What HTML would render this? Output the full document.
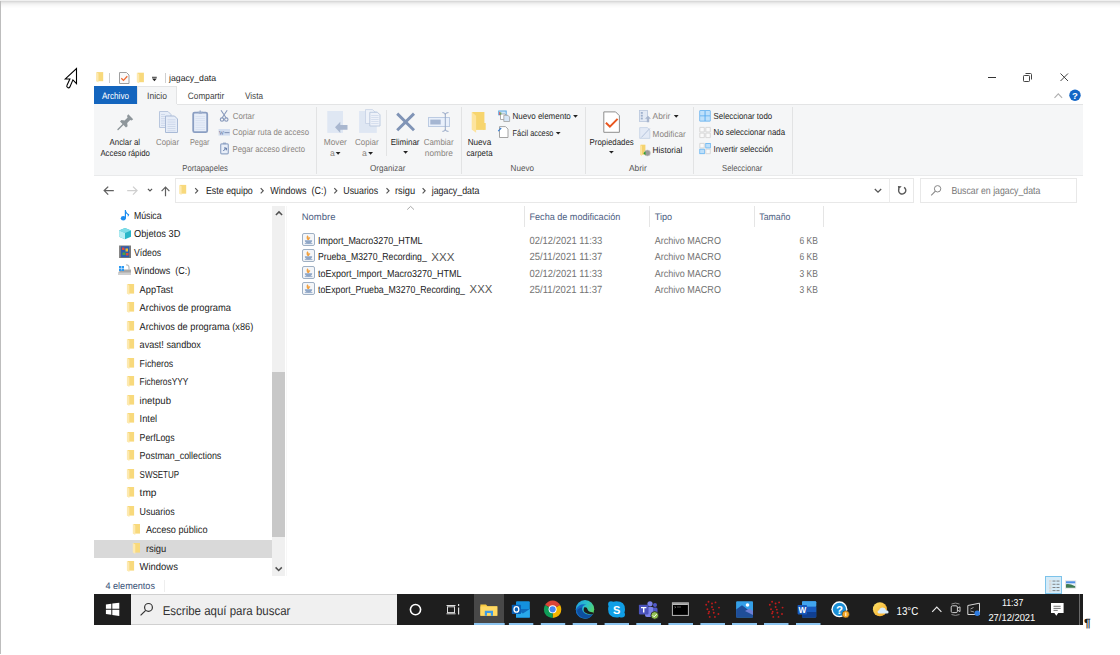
<!DOCTYPE html>
<html><head><meta charset="utf-8"><style>
html,body{margin:0;padding:0;}
body{width:1120px;height:655px;overflow:hidden;position:relative;background:#fff;font-family:"Liberation Sans",sans-serif;}
.t{position:absolute;line-height:1;white-space:pre;}
.r{position:absolute;display:block;}
</style></head><body>
<div class="r" style="left:0px;top:0px;width:1120px;height:1px;background:#f0f0f0;"></div>
<div class="r" style="left:0px;top:1px;width:1120px;height:1px;background:#d9d9d9;"></div>
<div class="r" style="left:0px;top:2px;width:1120px;height:1px;background:#e5e5e5;"></div>
<div class="r" style="left:0px;top:3px;width:1120px;height:1px;background:#eeeeee;"></div>
<div class="r" style="left:0px;top:4px;width:1120px;height:1px;background:#f4f4f4;"></div>
<div class="r" style="left:0px;top:5px;width:1120px;height:1px;background:#f8f8f8;"></div>
<div class="r" style="left:0px;top:6px;width:1120px;height:1px;background:#fbfbfb;"></div>
<div class="r" style="left:0px;top:7px;width:1120px;height:1px;background:#fdfdfd;"></div>
<div class="r" style="left:0px;top:1px;width:1px;height:653px;background:#bdbdbd;"></div>
<div class="r" style="left:94px;top:86px;width:43px;height:18px;background:#1465be;"></div>
<div class="r" style="left:137px;top:86px;width:40px;height:19px;background:#f5f6f7;box-sizing:border-box;border:1px solid #e3e4e5;border-bottom:none;"></div>
<div class="r" style="left:94px;top:104px;width:989px;height:72px;background:#f5f6f7;"></div>
<div class="r" style="left:177px;top:104px;width:906px;height:1px;background:#e3e4e5;"></div>
<div class="r" style="left:94px;top:175px;width:989px;height:1px;background:#e9eaeb;"></div>
<div class="r" style="left:316px;top:107px;width:1px;height:67px;background:#e2e3e4;"></div>
<div class="r" style="left:461px;top:107px;width:1px;height:67px;background:#e2e3e4;"></div>
<div class="r" style="left:585px;top:107px;width:1px;height:67px;background:#e2e3e4;"></div>
<div class="r" style="left:693px;top:107px;width:1px;height:67px;background:#e2e3e4;"></div>
<div class="r" style="left:792px;top:107px;width:1px;height:67px;background:#e2e3e4;"></div>
<div class="r" style="left:386px;top:110px;width:1px;height:46px;background:#e2e3e4;"></div>
<div class="r" style="left:175px;top:178px;width:739px;height:25px;background:#fff;box-sizing:border-box;border:1px solid #e8e8e8;"></div>
<div class="r" style="left:889px;top:178px;width:1px;height:25px;background:#ebebeb;"></div>
<div class="r" style="left:920px;top:178px;width:157px;height:25px;background:#fff;box-sizing:border-box;border:1px solid #e8e8e8;"></div>
<div class="r" style="left:94px;top:540px;width:178px;height:18px;background:#d9d9d9;"></div>
<div class="r" style="left:272px;top:206px;width:13px;height:370px;background:#f0f0f0;"></div>
<div class="r" style="left:272px;top:372px;width:13px;height:165px;background:#c8c8c8;"></div>
<div class="r" style="left:286px;top:206px;width:1px;height:370px;background:#f7f7f7;"></div>
<div class="r" style="left:524px;top:206px;width:1px;height:21px;background:#e5e5e5;"></div>
<div class="r" style="left:649px;top:206px;width:1px;height:21px;background:#e5e5e5;"></div>
<div class="r" style="left:754px;top:206px;width:1px;height:21px;background:#e5e5e5;"></div>
<div class="r" style="left:823px;top:206px;width:1px;height:21px;background:#e5e5e5;"></div>
<div class="r" style="left:164px;top:580px;width:1px;height:12px;background:#eeeeee;"></div>
<div class="r" style="left:1045px;top:576px;width:17px;height:18px;background:#d5ebf8;box-sizing:border-box;border:1px solid #7cc3ea;"></div>
<div class="r" style="left:94px;top:594px;width:989px;height:31px;background:#1e1e1e;"></div>
<div class="r" style="left:131px;top:594px;width:266px;height:31px;background:#f0f0f0;box-sizing:border-box;border-top:1px solid #d0d0d0;border-bottom:1px solid #d0d0d0;"></div>
<div class="r" style="left:474px;top:594px;width:30px;height:31px;background:#484848;"></div>
<div class="r" style="left:1079px;top:594px;width:1px;height:31px;background:#6a6a6a;"></div>
<svg class="r" style="left:0;top:0" width="1120" height="655" viewBox="0 0 1120 655"><path d="M76.5 68.5 L76.5 83.6 L72.9 79.9 L69.9 86.9 Q68.9 88.4 67.4 87.4 Q66.4 86.6 66.9 85.6 L69.9 79 L65.3 78.9 Z" fill="#fff" stroke="#000" stroke-width="1.1" stroke-linejoin="miter"/><rect x="96.70" y="72.10" width="6.50" height="9.10" fill="#f8d97c"/><path d="M96.10 72.10 L98.51 73.57 L98.51 82.60 L96.10 81.13Z" fill="#fde9b0"/><rect x="109" y="73" width="1" height="10" fill="#cfcfcf"/><path d="M119.5 72.5 H126.5 L129 75 V83.5 H119.5 Z" fill="#fafafa" stroke="#a0a0a0" stroke-width="1"/><polyline points="121.3,78.2 123.5,80.4 127.3,76.3" fill="none" stroke="#f06a33" stroke-width="1.3"/><rect x="137.40" y="72.70" width="6.50" height="9.50" fill="#f8d97c"/><path d="M136.80 72.70 L139.21 74.23 L139.21 83.60 L136.80 82.07Z" fill="#fde9b0"/><rect x="152" y="76.8" width="4.8" height="0.9" fill="#222"/><path d="M152 78.6 H156.8 L154.4 81.3Z" fill="#222"/><rect x="165" y="73" width="1" height="10" fill="#cfcfcf"/><rect x="988" y="77" width="8" height="1" fill="#333"/><rect x="1023.5" y="75.5" width="6" height="6" rx="0.8" fill="none" stroke="#444" stroke-width="1"/><path d="M1025.5 73.5 H1030.5 Q1031.5 73.5 1031.5 74.5 V79.5" fill="none" stroke="#444" stroke-width="1"/><path d="M1060.5 73.5 L1068 81 M1068 73.5 L1060.5 81" stroke="#444" stroke-width="1"/><polyline points="1054.5,97.8 1058.3,93.8 1062.1,97.8" fill="none" stroke="#b0b0b0" stroke-width="1.1"/><circle cx="1075" cy="95.2" r="5.7" fill="#1366c6"/><text x="1075" y="98.9" font-size="9.5" font-weight="700" fill="#fff" text-anchor="middle" font-family="Liberation Sans">?</text><path d="M118 129.5 L123.5 124" stroke="#8e969b" stroke-width="1.4" stroke-linecap="round"/><path d="M128.3 114.3 L133.2 119.2 L131.6 120.6 L130.2 120 L127.2 123 L127.6 126.2 L126 127.6 L120 121.6 L121.4 120 L124.6 120.4 L127.6 117.4 L127 116Z" fill="#8e969b"/><path d="M159.5 111.5 H168 L171 114.5 V127.5 H159.5Z" fill="#e6edf8" stroke="#b9c7de" stroke-width="1"/><path d="M165.5 116 H174.5 L177.5 119 V132.5 H165.5Z" fill="#e6edf8" stroke="#a9bad6" stroke-width="1"/><rect x="167.5" y="119.5" width="8" height="0.7" fill="#c3d0e6"/><rect x="167.5" y="121.7" width="8" height="0.7" fill="#c3d0e6"/><rect x="167.5" y="123.9" width="8" height="0.7" fill="#c3d0e6"/><rect x="167.5" y="126.1" width="8" height="0.7" fill="#c3d0e6"/><rect x="167.5" y="128.3" width="8" height="0.7" fill="#c3d0e6"/><rect x="167.5" y="130.5" width="8" height="0.7" fill="#c3d0e6"/><rect x="161" y="114.0" width="4" height="0.7" fill="#c3d0e6"/><rect x="161" y="116.2" width="4" height="0.7" fill="#c3d0e6"/><rect x="161" y="118.4" width="4" height="0.7" fill="#c3d0e6"/><rect x="161" y="120.6" width="4" height="0.7" fill="#c3d0e6"/><rect x="161" y="122.8" width="4" height="0.7" fill="#c3d0e6"/><rect x="161" y="125.0" width="4" height="0.7" fill="#c3d0e6"/><rect x="193.2" y="112.6" width="14" height="19.6" rx="1.5" fill="#e6edf8" stroke="#8a9ec2" stroke-width="1.8"/><path d="M197.5 111.8 H203 L201.5 113.8 H199Z M199.5 110.4 h1.4 v1.6 h-1.4z" fill="#9aacca"/><rect x="195.5" y="116.0" width="9.5" height="0.6" fill="#d0dbee"/><rect x="195.5" y="118.2" width="9.5" height="0.6" fill="#d0dbee"/><rect x="195.5" y="120.4" width="9.5" height="0.6" fill="#d0dbee"/><rect x="195.5" y="122.6" width="9.5" height="0.6" fill="#d0dbee"/><rect x="195.5" y="124.8" width="9.5" height="0.6" fill="#d0dbee"/><rect x="195.5" y="127.0" width="9.5" height="0.6" fill="#d0dbee"/><rect x="195.5" y="129.2" width="9.5" height="0.6" fill="#d0dbee"/><path d="M221 110.2 L226.2 118 M227.2 110.2 L222 118" stroke="#8899bb" stroke-width="1.1"/><circle cx="222" cy="119.6" r="1.7" fill="none" stroke="#8899bb" stroke-width="1.1"/><circle cx="226.3" cy="119.6" r="1.7" fill="none" stroke="#8899bb" stroke-width="1.1"/><rect x="218.5" y="129" width="11.5" height="6.6" fill="#d3def0"/><text x="219" y="134.6" font-size="6" fill="#5b6f99" font-family="Liberation Serif" textLength="5" lengthAdjust="spacingAndGlyphs">W</text><rect x="224.5" y="132.3" width="5" height="0.8" fill="#6a7ea5"/><rect x="220.7" y="143.8" width="7.6" height="10" rx="1" fill="#e8eef8" stroke="#93a6c6" stroke-width="1.2"/><rect x="223" y="142.6" width="3" height="1.6" fill="#93a6c6"/><path d="M223.3 151 L226 148.3 M224 148 H226.3 V150.3" stroke="#5670a0" stroke-width="1" fill="none"/><rect x="327.3" y="111" width="15.7" height="21.9" fill="#dfe7f3"/><path d="M335 127.3 L340.3 121.8 V125.1 H347.5 V129.8 H340.3 V133.1Z" fill="#a9b7cf"/><rect x="359.1" y="111" width="17.7" height="21.9" fill="#dfe7f3"/><path d="M365.5 109.6 H372.5 L375 112 V123.5 H365.5Z" fill="#eef2f9" stroke="#c5d1e5" stroke-width="0.8"/><path d="M369.8 112.3 H377.5 L380 114.8 V126 H369.8Z" fill="#eef2f9" stroke="#b9c7de" stroke-width="0.9"/><rect x="371.2" y="115.0" width="7.4" height="0.6" fill="#c6d2e6"/><rect x="371.2" y="117.0" width="7.4" height="0.6" fill="#c6d2e6"/><rect x="371.2" y="119.0" width="7.4" height="0.6" fill="#c6d2e6"/><rect x="371.2" y="121.0" width="7.4" height="0.6" fill="#c6d2e6"/><rect x="371.2" y="123.0" width="7.4" height="0.6" fill="#c6d2e6"/><path d="M397.2 113.6 L414 130.2 M414 113.6 L397.2 130.2" stroke="#8094b6" stroke-width="2.9"/><rect x="428.5" y="117.5" width="21" height="9" fill="#e9f0fb" stroke="#bccbe2" stroke-width="1"/><rect x="430.3" y="119.6" width="10.4" height="4.9" fill="#a5b6d2"/><path d="M445.3 113.5 V130.5 M442.4 112.6 Q445.3 112.6 445.3 114.5 Q445.3 112.6 448.5 112.6 M442.4 131.4 Q445.3 131.4 445.3 129.5 Q445.3 131.4 448.5 131.4" stroke="#98a9c7" stroke-width="1" fill="none"/><rect x="472.2" y="112" width="12.2" height="17.9" fill="#f7d56e"/><rect x="483" y="123" width="2.7" height="6.9" fill="#f7d56e"/><path d="M471.7 112 L476.1 115.8 V132.7 L471.7 129.6Z" fill="#fde49e"/><rect x="498.2" y="110.5" width="8.5" height="4.8" fill="#5aa7e0"/><rect x="499.2" y="111.5" width="6.5" height="2.8" fill="#cfe6f7"/><path d="M500.5 114 H505 L506.5 115.5 V119.5 H500.5Z" fill="#fff" stroke="#9a9a9a" stroke-width="0.8"/><path d="M503.8 115.3 H508 L509.6 117 V121.5 H503.8Z" fill="#d6e6f6" stroke="#a0a0a0" stroke-width="0.8"/><rect x="499.3" y="112" width="1" height="3" fill="#d44"/><rect x="500.3" y="112.5" width="1" height="2" fill="#4a4"/><path d="M499.5 126.6 H505.5 L508 129.1 V137.5 H499.5Z" fill="#fff" stroke="#9a9a9a" stroke-width="0.9"/><path d="M497.8 130.8 L500.8 127.6 L501.6 128.4 L498.6 131.6Z" fill="#3b7fd0"/><path d="M603.8 111.9 H615.6 L619.4 115.7 V132.3 H603.8Z" fill="#fff" stroke="#8e8e8e" stroke-width="1"/><polyline points="605.9,122.7 609.9,126.7 617.6,118.9" fill="none" stroke="#e9561f" stroke-width="2"/><rect x="639.5" y="110.5" width="8" height="11" fill="#e2e9f4" stroke="#b8c6dc" stroke-width="0.8"/><rect x="640.8" y="112.0" width="2" height="1.8" fill="#9eb0cc"/><rect x="640.8" y="114.8" width="2" height="1.8" fill="#9eb0cc"/><rect x="640.8" y="117.6" width="2" height="1.8" fill="#9eb0cc"/><path d="M646.8 122.3 V118.8 H645 L648 115.8 L651 118.8 H649.2 V122.3Z" fill="#a8b6ce"/><path d="M639.7 127.6 H647.5 L649.8 130 V138.4 H639.7Z" fill="#e3eaf6" stroke="#c3d0e4" stroke-width="0.8"/><path d="M641.3 137.5 L649.8 128.5" stroke="#b5c4dc" stroke-width="1"/><rect x="640.6" y="144.7" width="4.8" height="10" fill="#f5d36e"/><path d="M640 144.7 L642 146 V156 L640 154.7Z" fill="#fde49e"/><circle cx="647.4" cy="153" r="3" fill="#9a9a9a" stroke="#c8c8c8" stroke-width="0.6"/><path d="M643.3 153.2 L645.5 151.2 L645.5 155.2Z" fill="#2da02d"/><rect x="699.4" y="110.2" width="11.2" height="11.3" rx="0.8" fill="#52a8ee"/><path d="M700.1 110.9 h4.5 v4.6 h-4.5z M705.5 110.9 h4.4 v4.6 h-4.4z M700.1 116.3 h4.5 v4.5 h-4.5z M705.5 116.3 h4.4 v4.5 h-4.4z" fill="#bfe0fa"/><path d="M699.8 127.4 h4.5 v4.5 h-4.5z M705.8 127.4 h4.5 v4.5 h-4.5z M699.8 133.1 h4.5 v4.5 h-4.5z M705.8 133.1 h4.5 v4.5 h-4.5z" fill="#fafafa" stroke="#d0d0d0" stroke-width="0.8"/><path d="M699.8 143.4 h4.5 v4.5 h-4.5z M705.8 149.2 h4.5 v4.5 h-4.5z" fill="#fafafa" stroke="#d0d0d0" stroke-width="0.8"/><rect x="705.4" y="143" width="5.3" height="5.3" fill="#5aaef0"/><rect x="706.1" y="143.7" width="3.9" height="3.9" fill="#bfe0fa"/><rect x="699.4" y="148.8" width="5.3" height="5.3" fill="#5aaef0"/><rect x="700.1" y="149.5" width="3.9" height="3.9" fill="#bfe0fa"/><path d="M335.7 152.1 H340.5 L338.1 154.7Z" fill="#222"/><path d="M368.2 152.1 H373.0 L370.6 154.7Z" fill="#222"/><path d="M403.2 151.1 H408.0 L405.6 153.7Z" fill="#222"/><path d="M573.1 115.1 H577.9 L575.5 117.7Z" fill="#222"/><path d="M555.8 132.0 H560.6 L558.2 134.6Z" fill="#222"/><path d="M609.0 151.0 H613.8 L611.4 153.6Z" fill="#222"/><path d="M673.8 115.1 H678.6 L676.2 117.7Z" fill="#222"/><path d="M113.8 190.6 H104.3 M108.2 186.6 L104.2 190.6 L108.2 194.6" fill="none" stroke="#606060" stroke-width="1.3"/><path d="M127.2 190.6 H136.9 M133 186.6 L137 190.6 L133 194.6" fill="none" stroke="#cfcfcf" stroke-width="1.3"/><polyline points="147.9,188.8 150,190.9 152.1,188.8" fill="none" stroke="#555" stroke-width="1.2"/><path d="M165.5 196.2 V187.3 M161.6 191.2 L165.5 187.2 L169.4 191.2" fill="none" stroke="#606060" stroke-width="1.2"/><rect x="179.80" y="184.90" width="6.40" height="8.80" fill="#f8d97c"/><path d="M179.20 184.90 L181.58 186.33 L181.58 195.10 L179.20 193.67Z" fill="#fde9b0"/><polyline points="195.2,188.2 197.7,190.8 195.2,193.4" fill="none" stroke="#555" stroke-width="1.2"/><polyline points="260.7,188.2 263.2,190.8 260.7,193.4" fill="none" stroke="#555" stroke-width="1.2"/><polyline points="334.3,188.2 336.8,190.8 334.3,193.4" fill="none" stroke="#555" stroke-width="1.2"/><polyline points="386.5,188.2 389.0,190.8 386.5,193.4" fill="none" stroke="#555" stroke-width="1.2"/><polyline points="422.6,188.2 425.1,190.8 422.6,193.4" fill="none" stroke="#555" stroke-width="1.2"/><polyline points="874.8,189 878,192.2 881.2,189" fill="none" stroke="#555" stroke-width="1.3"/><path d="M904 187.3 A3.6 3.6 0 1 1 899.1 188.6" fill="none" stroke="#5a5a5a" stroke-width="1.4"/><path d="M897.9 185.9 L901.7 186.2 L898.3 189.8Z" fill="#5a5a5a"/><circle cx="937.6" cy="188.8" r="3.2" fill="none" stroke="#888" stroke-width="1"/><path d="M935.4 191.1 L931.2 195.3" stroke="#888" stroke-width="1.1"/><polyline points="275.9,215 279,211.9 282.1,215" fill="none" stroke="#505050" stroke-width="1.5"/><polyline points="275.6,567.4 278.7,570.5 281.8,567.4" fill="none" stroke="#505050" stroke-width="1.5"/><ellipse cx="123.3" cy="218.3" rx="2.5" ry="2.2" fill="#1a8cf0"/><rect x="124.8" y="210" width="1.2" height="8.4" fill="#1a8cf0"/><path d="M125.6 210.2 Q126.5 213 129.3 214.6 Q128.8 216.5 127.6 217 Q128.8 214.8 125.6 213.2Z" fill="#1a8cf0"/><path d="M125 228 L131 230.5 L131 236.8 L125 239.3 L119.1 236.8 L119.1 230.5Z" fill="#29b6c8"/><path d="M125 228 L131 230.5 L125 233 L119.1 230.5Z" fill="#7fdde8"/><path d="M119.1 230.5 L125 233 V239.3 L119.1 236.8Z" fill="#b8eef4"/><rect x="119.1" y="245.5" width="11.9" height="12.5" fill="#7a7a7a"/><rect x="121" y="246.3" width="8.1" height="10.9" fill="#2a5db0"/><rect x="122" y="247.5" width="2.5" height="2.5" fill="#e04a3a"/><rect x="125.5" y="248.5" width="2.5" height="3" fill="#f0c030"/><rect x="122.5" y="252.5" width="3" height="2.5" fill="#50a040"/><rect x="126" y="253" width="2.5" height="2.5" fill="#e04a3a"/><path d="M118.5 272 L122 269.5 H131 V275 H118.5Z" fill="#a8a8a8"/><path d="M118.5 272.5 H131 V275 H118.5Z" fill="#cfcfcf"/><rect x="119" y="266" width="2.3" height="2.3" fill="#2b9af3"/><rect x="121.7" y="266" width="2.3" height="2.3" fill="#2b9af3"/><rect x="119" y="268.7" width="2.3" height="2.3" fill="#2b9af3"/><rect x="121.7" y="268.7" width="2.3" height="2.3" fill="#2b9af3"/><path d="M126 265 Q129 264.6 129 267.5 V270" fill="none" stroke="#bdbdbd" stroke-width="1.2"/><rect x="127.50" y="284.00" width="6.60" height="9.60" fill="#f8d97c"/><path d="M126.90 284.00 L129.35 285.54 L129.35 295.00 L126.90 293.46Z" fill="#fde9b0"/><rect x="127.50" y="302.00" width="6.60" height="9.60" fill="#f8d97c"/><path d="M126.90 302.00 L129.35 303.54 L129.35 313.00 L126.90 311.46Z" fill="#fde9b0"/><rect x="127.50" y="321.00" width="6.60" height="9.60" fill="#f8d97c"/><path d="M126.90 321.00 L129.35 322.54 L129.35 332.00 L126.90 330.46Z" fill="#fde9b0"/><rect x="127.50" y="339.00" width="6.60" height="9.60" fill="#f8d97c"/><path d="M126.90 339.00 L129.35 340.54 L129.35 350.00 L126.90 348.46Z" fill="#fde9b0"/><rect x="127.50" y="358.00" width="6.60" height="9.60" fill="#f8d97c"/><path d="M126.90 358.00 L129.35 359.54 L129.35 369.00 L126.90 367.46Z" fill="#fde9b0"/><rect x="127.50" y="376.00" width="6.60" height="9.60" fill="#f8d97c"/><path d="M126.90 376.00 L129.35 377.54 L129.35 387.00 L126.90 385.46Z" fill="#fde9b0"/><rect x="127.50" y="395.00" width="6.60" height="9.60" fill="#f8d97c"/><path d="M126.90 395.00 L129.35 396.54 L129.35 406.00 L126.90 404.46Z" fill="#fde9b0"/><rect x="127.50" y="413.00" width="6.60" height="9.60" fill="#f8d97c"/><path d="M126.90 413.00 L129.35 414.54 L129.35 424.00 L126.90 422.46Z" fill="#fde9b0"/><rect x="127.50" y="432.00" width="6.60" height="9.60" fill="#f8d97c"/><path d="M126.90 432.00 L129.35 433.54 L129.35 443.00 L126.90 441.46Z" fill="#fde9b0"/><rect x="127.50" y="450.00" width="6.60" height="9.60" fill="#f8d97c"/><path d="M126.90 450.00 L129.35 451.54 L129.35 461.00 L126.90 459.46Z" fill="#fde9b0"/><rect x="127.50" y="469.00" width="6.60" height="9.60" fill="#f8d97c"/><path d="M126.90 469.00 L129.35 470.54 L129.35 480.00 L126.90 478.46Z" fill="#fde9b0"/><rect x="127.50" y="487.00" width="6.60" height="9.60" fill="#f8d97c"/><path d="M126.90 487.00 L129.35 488.54 L129.35 498.00 L126.90 496.46Z" fill="#fde9b0"/><rect x="127.50" y="506.00" width="6.60" height="9.60" fill="#f8d97c"/><path d="M126.90 506.00 L129.35 507.54 L129.35 517.00 L126.90 515.46Z" fill="#fde9b0"/><rect x="133.40" y="524.00" width="6.60" height="9.60" fill="#f8d97c"/><path d="M132.80 524.00 L135.25 525.54 L135.25 535.00 L132.80 533.46Z" fill="#fde9b0"/><rect x="133.40" y="543.00" width="6.60" height="9.60" fill="#f8d97c"/><path d="M132.80 543.00 L135.25 544.54 L135.25 554.00 L132.80 552.46Z" fill="#fde9b0"/><rect x="127.50" y="561.00" width="6.60" height="9.60" fill="#f8d97c"/><path d="M126.90 561.00 L129.35 562.54 L129.35 572.00 L126.90 570.46Z" fill="#fde9b0"/><polyline points="407.2,209.6 410.6,206.4 414,209.6" fill="none" stroke="#a8a8a8" stroke-width="1"/><rect x="302.5" y="233.5" width="12" height="12" rx="1.5" fill="#f4f6f9" stroke="#9fb0c4" stroke-width="1"/><path d="M307.2 235.2 q1.8 1 1.2 2.4 q1.6 -1 2 0.3 q-1.2 0.4 -1.4 2.2 q-1.6 0 -2.2 -1.2 q-0.6 -2 0.4 -3.7z" fill="#f0a040"/><path d="M304.8 240.2 h7.4 q0 2.8 -3.7 3.6 q-3.7 -0.8 -3.7 -3.6z" fill="#8fa6c6"/><rect x="304.8" y="243.2" width="7.6" height="0.9" fill="#8fa6c6"/><rect x="302.5" y="249.5" width="12" height="12" rx="1.5" fill="#f4f6f9" stroke="#9fb0c4" stroke-width="1"/><path d="M307.2 251.2 q1.8 1 1.2 2.4 q1.6 -1 2 0.3 q-1.2 0.4 -1.4 2.2 q-1.6 0 -2.2 -1.2 q-0.6 -2 0.4 -3.7z" fill="#f0a040"/><path d="M304.8 256.2 h7.4 q0 2.8 -3.7 3.6 q-3.7 -0.8 -3.7 -3.6z" fill="#8fa6c6"/><rect x="304.8" y="259.2" width="7.6" height="0.9" fill="#8fa6c6"/><rect x="302.5" y="266.5" width="12" height="12" rx="1.5" fill="#f4f6f9" stroke="#9fb0c4" stroke-width="1"/><path d="M307.2 268.2 q1.8 1 1.2 2.4 q1.6 -1 2 0.3 q-1.2 0.4 -1.4 2.2 q-1.6 0 -2.2 -1.2 q-0.6 -2 0.4 -3.7z" fill="#f0a040"/><path d="M304.8 273.2 h7.4 q0 2.8 -3.7 3.6 q-3.7 -0.8 -3.7 -3.6z" fill="#8fa6c6"/><rect x="304.8" y="276.2" width="7.6" height="0.9" fill="#8fa6c6"/><rect x="302.5" y="282.5" width="12" height="12" rx="1.5" fill="#f4f6f9" stroke="#9fb0c4" stroke-width="1"/><path d="M307.2 284.2 q1.8 1 1.2 2.4 q1.6 -1 2 0.3 q-1.2 0.4 -1.4 2.2 q-1.6 0 -2.2 -1.2 q-0.6 -2 0.4 -3.7z" fill="#f0a040"/><path d="M304.8 289.2 h7.4 q0 2.8 -3.7 3.6 q-3.7 -0.8 -3.7 -3.6z" fill="#8fa6c6"/><rect x="304.8" y="292.2" width="7.6" height="0.9" fill="#8fa6c6"/><rect x="1049" y="580.0" width="2.5" height="2.5" fill="#d8d8d8"/><rect x="1052.5" y="580.6" width="3" height="0.9" fill="#777"/><rect x="1056.5" y="580.6" width="3" height="0.9" fill="#777"/><rect x="1049" y="583.2" width="2.5" height="2.5" fill="#d8d8d8"/><rect x="1052.5" y="583.8" width="3" height="0.9" fill="#777"/><rect x="1056.5" y="583.8" width="3" height="0.9" fill="#777"/><rect x="1049" y="586.4" width="2.5" height="2.5" fill="#d8d8d8"/><rect x="1052.5" y="587.0" width="3" height="0.9" fill="#777"/><rect x="1056.5" y="587.0" width="3" height="0.9" fill="#777"/><rect x="1049" y="589.6" width="2.5" height="2.5" fill="#d8d8d8"/><rect x="1052.5" y="590.2" width="3" height="0.9" fill="#777"/><rect x="1056.5" y="590.2" width="3" height="0.9" fill="#777"/><rect x="1065" y="580.3" width="11.2" height="8.4" fill="#e4e4e4"/><rect x="1066" y="581.3" width="9.2" height="6.4" fill="#e8f2fb"/><rect x="1066" y="581.3" width="9.2" height="2" fill="#4f8fe6"/><path d="M1066 584.2 Q1069 583 1075.2 586.3 V587.7 H1066Z" fill="#3f7a52"/><path d="M105.9 604.6 L111.3 603.8 V608.8 H105.9Z M112.3 603.6 L119.3 602.7 V608.8 H112.3Z M105.9 609.8 H111.3 V614.8 L105.9 614.1Z M112.3 609.8 H119.3 V616 L112.3 615Z" fill="#fff"/><circle cx="148.5" cy="607.4" r="3.9" fill="none" stroke="#333" stroke-width="1.2"/><path d="M145.7 610.3 L140.6 615.4" stroke="#333" stroke-width="1.2"/><circle cx="415.5" cy="609.6" r="5.1" fill="none" stroke="#fff" stroke-width="1.6"/><path d="M446.5 605.5 H455.5 M446.5 613.8 H455.5" stroke="#ddd" stroke-width="1"/><rect x="447.5" y="606.8" width="7" height="5.8" fill="none" stroke="#ddd" stroke-width="1"/><rect x="458" y="604" width="1.2" height="2" fill="#ddd"/><rect x="458" y="607.5" width="1.2" height="7" fill="#ddd"/><path d="M480.4 604.5 V615.7 H497.3 V606.2 H487.5 L486 604.5Z" fill="#f8c93f"/><rect x="480.4" y="606.4" width="16.9" height="9.3" fill="#ffd964"/><path d="M484.8 610.8 H493 V615.7 H490.8 V613 H487 V615.7 H484.8Z" fill="#3c9be8"/><rect x="516" y="601.2" width="13.8" height="16.3" rx="1" fill="#1490df"/><rect x="516" y="609" width="13.8" height="8.5" fill="#0f6cbd"/><path d="M516 609 L522.9 613.5 L529.8 609 V617.5 H516Z" fill="#28a8ea"/><rect x="511.8" y="604.8" width="9.2" height="9.2" rx="0.8" fill="#0a5fb4"/><ellipse cx="516.4" cy="609.4" rx="2.4" ry="2.8" fill="none" stroke="#fff" stroke-width="1.3"/><path d="M552.6 609.3 L545.07 604.95 A8.7 8.7 0 0 1 560.13 604.95Z" fill="#db4437"/><path d="M552.6 609.3 L560.13 604.95 A8.7 8.7 0 0 1 552.6 618Z" fill="#f4b400"/><path d="M552.6 609.3 L552.6 618 A8.7 8.7 0 0 1 545.07 604.95Z" fill="#0f9d58"/><circle cx="552.6" cy="609.3" r="4" fill="#fff"/><circle cx="552.6" cy="609.3" r="3.1" fill="#4285f4"/><defs><linearGradient id="edg" x1="0" y1="0" x2="1" y2="0.6"><stop offset="0" stop-color="#1e9de6"/><stop offset="0.55" stop-color="#2cc3c8"/><stop offset="1" stop-color="#5ad660"/></linearGradient></defs><circle cx="585" cy="609.2" r="9.2" fill="url(#edg)"/><path d="M575.8 609.5 A9.2 9.2 0 0 0 593 614 Q588.5 615.5 585 613.2 Q581.5 610.8 582.3 607.6 Q583.3 604.8 586.5 604.8 Q580 602.5 575.8 609.5Z" fill="#1467c2"/><path d="M577 611 Q578.5 617.5 585 618.3 Q590 618.2 592.6 614.3 Q587.5 616 584.3 613.6 Q581 611 582.3 607.6 Q578.5 608 577 611Z" fill="#0d4f9e"/><path d="M584.3 607.3 Q587.2 606.8 587.6 609.6 Q588 612 593.2 612.6 L593 614 Q587.8 614.6 585 612.6 Q582.6 610.6 584.3 607.3Z" fill="#1c1c1c"/><path d="M611 601.2 Q608.1 601.2 608.1 604.2 Q608.1 605.2 608.6 606.2 Q608.1 607.4 608.1 609.3 Q608.1 617.5 616.5 617.5 Q618.4 617.5 619.5 617 Q620.5 617.5 621.8 617.5 Q625 617.5 625 614.5 Q625 613.4 624.4 612.4 Q625 611.2 625 609.3 Q625 601.2 616.5 601.2 Q614.5 601.2 613.5 601.7 Q612.3 601.2 611 601.2Z" fill="#109fe6"/><text x="616.6" y="613.6" font-size="11" font-weight="700" fill="#fff" text-anchor="middle" font-family="Liberation Sans">S</text><circle cx="650" cy="603.8" r="2.6" fill="#7b83eb"/><circle cx="655" cy="605" r="2" fill="#5059c9"/><rect x="645" y="607" width="9" height="10" rx="2" fill="#7b83eb"/><rect x="653" y="607.5" width="4.5" height="7" rx="1.5" fill="#5059c9"/><rect x="638.9" y="604.8" width="9.6" height="9.6" rx="0.8" fill="#4b53bc"/><path d="M641 607 H646.4 V608.3 H644.4 V612.4 H643 V608.3 H641Z" fill="#fff"/><circle cx="654.7" cy="615.4" r="3.8" fill="#92c353" stroke="#1c1c1c" stroke-width="0.8"/><polyline points="652.8,615.4 654.2,616.8 656.7,614.1" fill="none" stroke="#fff" stroke-width="1"/><rect x="672.4" y="602.8" width="16" height="12.6" fill="#000" stroke="#b8b8b8" stroke-width="1"/><rect x="672.9" y="603.3" width="15" height="1.6" fill="#cfcfcf"/><path d="M674.5 606.5 L676 607.3 L674.5 608 M677 607 H681" stroke="#888" stroke-width="0.6" fill="none"/><circle cx="708.5" cy="601.8" r="0.95" fill="#c01c1c"/><circle cx="715.5" cy="602.4" r="0.95" fill="#c01c1c"/><circle cx="712.0" cy="603.5" r="0.95" fill="#c01c1c"/><circle cx="706.2" cy="604.7" r="0.95" fill="#c01c1c"/><circle cx="712.0" cy="607.0" r="0.95" fill="#c01c1c"/><circle cx="719.0" cy="607.6" r="0.95" fill="#c01c1c"/><circle cx="707.4" cy="609.3" r="0.95" fill="#c01c1c"/><circle cx="713.2" cy="609.6" r="0.95" fill="#c01c1c"/><circle cx="709.1" cy="611.7" r="0.95" fill="#c01c1c"/><circle cx="708.5" cy="613.4" r="0.95" fill="#c01c1c"/><circle cx="713.8" cy="612.8" r="0.95" fill="#c01c1c"/><circle cx="718.4" cy="614.0" r="0.95" fill="#c01c1c"/><circle cx="709.7" cy="616.9" r="0.95" fill="#c01c1c"/><circle cx="714.9" cy="616.9" r="0.95" fill="#c01c1c"/><circle cx="772.1" cy="601.8" r="0.95" fill="#c01c1c"/><circle cx="779.1" cy="602.4" r="0.95" fill="#c01c1c"/><circle cx="775.6" cy="603.5" r="0.95" fill="#c01c1c"/><circle cx="769.8" cy="604.7" r="0.95" fill="#c01c1c"/><circle cx="775.6" cy="607.0" r="0.95" fill="#c01c1c"/><circle cx="782.6" cy="607.6" r="0.95" fill="#c01c1c"/><circle cx="771.0" cy="609.3" r="0.95" fill="#c01c1c"/><circle cx="776.8" cy="609.6" r="0.95" fill="#c01c1c"/><circle cx="772.7" cy="611.7" r="0.95" fill="#c01c1c"/><circle cx="772.1" cy="613.4" r="0.95" fill="#c01c1c"/><circle cx="777.4" cy="612.8" r="0.95" fill="#c01c1c"/><circle cx="782.0" cy="614.0" r="0.95" fill="#c01c1c"/><circle cx="773.3" cy="616.9" r="0.95" fill="#c01c1c"/><circle cx="778.5" cy="616.9" r="0.95" fill="#c01c1c"/><rect x="736.1" y="601.2" width="16.9" height="16.3" rx="1" fill="#35a0e8"/><path d="M736.1 617.5 V609.5 L742 605.2 L753 613.5 V617.5Z" fill="#1f4e99"/><path d="M745 611 L749.5 608.5 L753 611 V615Z" fill="#6d7fd6"/><circle cx="747.5" cy="605" r="1.8" fill="#fff"/><rect x="802" y="601.2" width="14.2" height="16.3" rx="1" fill="#2b7cd3"/><rect x="802" y="606.6" width="14.2" height="5.4" fill="#185abd"/><rect x="802" y="612" width="14.2" height="5.5" fill="#103f91"/><rect x="802" y="601.2" width="14.2" height="5.4" rx="1" fill="#41a5ee"/><rect x="797.6" y="605" width="9.4" height="9.4" rx="0.8" fill="#185abd"/><text x="802.3" y="612.8" font-size="8.2" font-weight="700" fill="#fff" text-anchor="middle" font-family="Liberation Sans">W</text><circle cx="839.4" cy="609.3" r="8" fill="#fff"/><circle cx="839.4" cy="609.3" r="6.6" fill="#1b8fd6"/><text x="839.6" y="613.6" font-size="11.5" font-weight="700" fill="#fff" text-anchor="middle" font-family="Liberation Sans">?</text><circle cx="845.8" cy="614.3" r="3.6" fill="#f6a623" stroke="#1c1c1c" stroke-width="0.5"/><rect x="845.3" y="612.5" width="1" height="3.6" fill="#fff"/><rect x="474" y="623" width="30.7" height="2" fill="#8cc4ef"/><rect x="508.9" y="623" width="24.4" height="2" fill="#8cc4ef"/><rect x="540.8" y="623" width="24.4" height="2" fill="#8cc4ef"/><rect x="572.7" y="623" width="24.4" height="2" fill="#8cc4ef"/><rect x="604.6" y="623" width="24.4" height="2" fill="#8cc4ef"/><rect x="636.3" y="623" width="24.7" height="2" fill="#8cc4ef"/><rect x="668.4" y="623" width="24.6" height="2" fill="#8cc4ef"/><rect x="700.4" y="623" width="24.6" height="2" fill="#8cc4ef"/><rect x="732" y="623" width="25.0" height="2" fill="#8cc4ef"/><rect x="764" y="623" width="24.5" height="2" fill="#8cc4ef"/><rect x="796" y="623" width="24.5" height="2" fill="#8cc4ef"/><defs><linearGradient id="sun" x1="0" y1="0" x2="1" y2="1"><stop offset="0" stop-color="#fde36a"/><stop offset="1" stop-color="#f5a623"/></linearGradient></defs><circle cx="879.9" cy="609.3" r="7" fill="url(#sun)"/><path d="M879 613.4 Q877.5 613.4 877.5 611.8 Q877.5 610.3 879.2 610.3 Q879.8 607.5 882.8 607.6 Q885.5 607.8 886 610.2 Q888.6 610.2 888.6 611.9 Q888.6 613.4 887 613.4Z" fill="#d8ecfb"/><polyline points="932.2,611.8 936.8,607.2 941.4,611.8" fill="none" stroke="#e8e8e8" stroke-width="1.2"/><rect x="951.2" y="605.8" width="6.2" height="6.8" rx="1.3" fill="none" stroke="#cfcfcf" stroke-width="1"/><path d="M957.6 608.2 L960 606.8 V611.6 L957.6 610.2" fill="none" stroke="#cfcfcf" stroke-width="1"/><path d="M951.5 604 Q955.5 602.2 959.5 604 M951.5 614.5 Q955.5 616.3 959.5 614.5" fill="none" stroke="#9a9a9a" stroke-width="0.9"/><path d="M967.8 605.5 L979.5 603.2 V614.5 L967.8 614.5Z" fill="none" stroke="#d8d8d8" stroke-width="1"/><path d="M970.5 609 L973.5 607.5 M970.5 611 L974 612" stroke="#bbb" stroke-width="0.8"/><circle cx="977.2" cy="613.3" r="2.7" fill="#2f7ce0"/><path d="M1051 603.1 H1063.6 V613 H1058.2 L1056.3 615.8 L1054.4 613 H1051Z" fill="#fff"/><rect x="1053.5" y="605.8" width="7.2" height="0.9" fill="#666"/><rect x="1053.5" y="607.9" width="7.2" height="0.9" fill="#666"/><rect x="1053.5" y="609.9" width="4.2" height="0.9" fill="#666"/></svg>
<svg class="r" style="left:0;top:0;white-space:pre" width="1120" height="655" viewBox="0 0 1120 655" text-rendering="geometricPrecision" font-family="Liberation Sans"><text x="169.00" y="81" font-size="8.80" fill="#222" textLength="47.00" lengthAdjust="spacingAndGlyphs">jagacy_data</text><text x="101.90" y="99" font-size="9.30" fill="#fff" textLength="27.10" lengthAdjust="spacingAndGlyphs">Archivo</text><text x="147.00" y="99" font-size="9.30" fill="#444" textLength="20.00" lengthAdjust="spacingAndGlyphs">Inicio</text><text x="187.80" y="99" font-size="9.30" fill="#444" textLength="36.40" lengthAdjust="spacingAndGlyphs">Compartir</text><text x="245.00" y="99" font-size="9.30" fill="#444" textLength="18.00" lengthAdjust="spacingAndGlyphs">Vista</text><text x="109.60" y="145" font-size="8.70" fill="#262626" textLength="30.50" lengthAdjust="spacingAndGlyphs">Anclar al</text><text x="100.40" y="156" font-size="8.70" fill="#262626" textLength="49.50" lengthAdjust="spacingAndGlyphs">Acceso rápido</text><text x="156.00" y="145" font-size="8.70" fill="#8a8580" textLength="23.00" lengthAdjust="spacingAndGlyphs">Copiar</text><text x="190.00" y="145" font-size="8.70" fill="#8a8580" textLength="19.50" lengthAdjust="spacingAndGlyphs">Pegar</text><text x="232.70" y="119" font-size="8.70" fill="#8a8580" textLength="21.90" lengthAdjust="spacingAndGlyphs">Cortar</text><text x="232.60" y="135" font-size="8.70" fill="#8a8580" textLength="76.40" lengthAdjust="spacingAndGlyphs">Copiar ruta de acceso</text><text x="232.60" y="152" font-size="8.70" fill="#8a8580" textLength="72.40" lengthAdjust="spacingAndGlyphs">Pegar acceso directo</text><text x="182.30" y="171" font-size="8.70" fill="#555" textLength="45.50" lengthAdjust="spacingAndGlyphs">Portapapeles</text><text x="323.70" y="145" font-size="8.70" fill="#8a8580" textLength="23.20" lengthAdjust="spacingAndGlyphs">Mover</text><text x="330.00" y="156" font-size="8.70" fill="#8a8580">a</text><text x="355.00" y="145" font-size="8.70" fill="#8a8580" textLength="23.60" lengthAdjust="spacingAndGlyphs">Copiar</text><text x="362.00" y="156" font-size="8.70" fill="#8a8580">a</text><text x="390.70" y="145" font-size="8.70" fill="#262626" textLength="28.80" lengthAdjust="spacingAndGlyphs">Eliminar</text><text x="423.70" y="145" font-size="8.70" fill="#8a8580" textLength="29.90" lengthAdjust="spacingAndGlyphs">Cambiar</text><text x="424.80" y="156" font-size="8.70" fill="#8a8580" textLength="28.20" lengthAdjust="spacingAndGlyphs">nombre</text><text x="370.00" y="171" font-size="8.70" fill="#555" textLength="35.40" lengthAdjust="spacingAndGlyphs">Organizar</text><text x="467.70" y="145" font-size="8.70" fill="#262626" textLength="23.50" lengthAdjust="spacingAndGlyphs">Nueva</text><text x="466.40" y="156" font-size="8.70" fill="#262626" textLength="26.10" lengthAdjust="spacingAndGlyphs">carpeta</text><text x="512.60" y="119" font-size="8.70" fill="#262626" textLength="58.20" lengthAdjust="spacingAndGlyphs">Nuevo elemento</text><text x="512.60" y="136" font-size="8.70" fill="#262626" textLength="40.80" lengthAdjust="spacingAndGlyphs">Fácil acceso</text><text x="510.60" y="171" font-size="8.70" fill="#555" textLength="23.40" lengthAdjust="spacingAndGlyphs">Nuevo</text><text x="589.60" y="145" font-size="8.70" fill="#262626" textLength="44.10" lengthAdjust="spacingAndGlyphs">Propiedades</text><text x="652.60" y="119" font-size="8.70" fill="#8a8580" textLength="17.70" lengthAdjust="spacingAndGlyphs">Abrir</text><text x="652.60" y="137" font-size="8.70" fill="#8a8580" textLength="33.20" lengthAdjust="spacingAndGlyphs">Modificar</text><text x="652.60" y="153" font-size="8.70" fill="#262626" textLength="29.70" lengthAdjust="spacingAndGlyphs">Historial</text><text x="629.00" y="171" font-size="8.70" fill="#555" textLength="17.80" lengthAdjust="spacingAndGlyphs">Abrir</text><text x="713.50" y="119" font-size="8.70" fill="#262626" textLength="58.70" lengthAdjust="spacingAndGlyphs">Seleccionar todo</text><text x="713.50" y="135" font-size="8.70" fill="#262626" textLength="71.50" lengthAdjust="spacingAndGlyphs">No seleccionar nada</text><text x="713.50" y="152" font-size="8.70" fill="#262626" textLength="59.50" lengthAdjust="spacingAndGlyphs">Invertir selección</text><text x="722.00" y="171" font-size="8.70" fill="#555" textLength="40.40" lengthAdjust="spacingAndGlyphs">Seleccionar</text><text x="205.90" y="194" font-size="10.30" fill="#222" textLength="46.90" lengthAdjust="spacingAndGlyphs">Este equipo</text><text x="270.20" y="194" font-size="10.30" fill="#222" textLength="56.20" lengthAdjust="spacingAndGlyphs">Windows &#160;(C:)</text><text x="343.30" y="194" font-size="10.30" fill="#222" textLength="34.80" lengthAdjust="spacingAndGlyphs">Usuarios</text><text x="395.00" y="194" font-size="10.30" fill="#222" textLength="20.10" lengthAdjust="spacingAndGlyphs">rsigu</text><text x="431.70" y="194" font-size="10.30" fill="#222" textLength="47.70" lengthAdjust="spacingAndGlyphs">jagacy_data</text><text x="951.40" y="194" font-size="10.30" fill="#777" textLength="88.90" lengthAdjust="spacingAndGlyphs">Buscar en jagacy_data</text><text x="133.90" y="219" font-size="10.20" fill="#222" textLength="27.70" lengthAdjust="spacingAndGlyphs">Música</text><text x="134.00" y="237" font-size="10.20" fill="#222" textLength="46.40" lengthAdjust="spacingAndGlyphs">Objetos 3D</text><text x="134.00" y="256" font-size="10.20" fill="#222" textLength="27.10" lengthAdjust="spacingAndGlyphs">Vídeos</text><text x="134.00" y="274" font-size="10.20" fill="#222" textLength="56.20" lengthAdjust="spacingAndGlyphs">Windows &#160;(C:)</text><text x="139.60" y="293" font-size="10.20" fill="#222" textLength="33.40" lengthAdjust="spacingAndGlyphs">AppTast</text><text x="139.60" y="311" font-size="10.20" fill="#222" textLength="91.40" lengthAdjust="spacingAndGlyphs">Archivos de programa</text><text x="139.60" y="330" font-size="10.20" fill="#222" textLength="113.70" lengthAdjust="spacingAndGlyphs">Archivos de programa (x86)</text><text x="139.60" y="348" font-size="10.20" fill="#222" textLength="61.30" lengthAdjust="spacingAndGlyphs">avast! sandbox</text><text x="139.60" y="367" font-size="10.20" fill="#222" textLength="33.60" lengthAdjust="spacingAndGlyphs">Ficheros</text><text x="139.60" y="385" font-size="10.20" fill="#222" textLength="48.80" lengthAdjust="spacingAndGlyphs">FicherosYYY</text><text x="139.60" y="404" font-size="10.20" fill="#222" textLength="31.40" lengthAdjust="spacingAndGlyphs">inetpub</text><text x="139.60" y="422" font-size="10.20" fill="#222" textLength="17.60" lengthAdjust="spacingAndGlyphs">Intel</text><text x="139.60" y="441" font-size="10.20" fill="#222" textLength="35.00" lengthAdjust="spacingAndGlyphs">PerfLogs</text><text x="139.60" y="459" font-size="10.20" fill="#222" textLength="81.70" lengthAdjust="spacingAndGlyphs">Postman_collections</text><text x="139.60" y="478" font-size="10.20" fill="#222" textLength="39.50" lengthAdjust="spacingAndGlyphs">SWSETUP</text><text x="139.60" y="496" font-size="10.20" fill="#222" textLength="16.90" lengthAdjust="spacingAndGlyphs">tmp</text><text x="139.60" y="515" font-size="10.20" fill="#222" textLength="35.00" lengthAdjust="spacingAndGlyphs">Usuarios</text><text x="145.90" y="533" font-size="10.20" fill="#222" textLength="61.60" lengthAdjust="spacingAndGlyphs">Acceso público</text><text x="145.90" y="552" font-size="10.20" fill="#222" textLength="20.40" lengthAdjust="spacingAndGlyphs">rsigu</text><text x="139.60" y="570" font-size="10.20" fill="#222" textLength="38.30" lengthAdjust="spacingAndGlyphs">Windows</text><text x="301.80" y="220" font-size="9.60" fill="#4d6082" textLength="33.60" lengthAdjust="spacingAndGlyphs">Nombre</text><text x="529.50" y="220" font-size="9.60" fill="#4d6082" textLength="90.80" lengthAdjust="spacingAndGlyphs">Fecha de modificación</text><text x="654.80" y="220" font-size="9.60" fill="#4d6082" textLength="17.30" lengthAdjust="spacingAndGlyphs">Tipo</text><text x="759.30" y="220" font-size="9.60" fill="#4d6082" textLength="31.20" lengthAdjust="spacingAndGlyphs">Tamaño</text><text x="318.00" y="244" font-size="10.20" fill="#222" textLength="104.60" lengthAdjust="spacingAndGlyphs">Import_Macro3270_HTML</text><text x="529.50" y="244" font-size="10.40" fill="#737373" textLength="72.80" lengthAdjust="spacingAndGlyphs">02/12/2021 11:33</text><text x="654.80" y="244" font-size="10.20" fill="#737373" textLength="66.10" lengthAdjust="spacingAndGlyphs">Archivo MACRO</text><text x="799.50" y="244" font-size="10.20" fill="#737373" textLength="18.40" lengthAdjust="spacingAndGlyphs">6 KB</text><text x="318.00" y="260" font-size="10.20" fill="#222" textLength="108.80" lengthAdjust="spacingAndGlyphs">Prueba_M3270_Recording_</text><text x="431.25" y="261" font-size="11.60" fill="#555" textLength="23.25" lengthAdjust="spacingAndGlyphs">XXX</text><text x="529.50" y="260" font-size="10.40" fill="#737373" textLength="72.80" lengthAdjust="spacingAndGlyphs">25/11/2021 11:37</text><text x="654.80" y="260" font-size="10.20" fill="#737373" textLength="66.10" lengthAdjust="spacingAndGlyphs">Archivo MACRO</text><text x="799.50" y="260" font-size="10.20" fill="#737373" textLength="18.40" lengthAdjust="spacingAndGlyphs">6 KB</text><text x="318.00" y="277" font-size="10.20" fill="#222" textLength="143.60" lengthAdjust="spacingAndGlyphs">toExport_Import_Macro3270_HTML</text><text x="529.50" y="277" font-size="10.40" fill="#737373" textLength="72.80" lengthAdjust="spacingAndGlyphs">02/12/2021 11:33</text><text x="654.80" y="277" font-size="10.20" fill="#737373" textLength="66.10" lengthAdjust="spacingAndGlyphs">Archivo MACRO</text><text x="799.50" y="277" font-size="10.20" fill="#737373" textLength="18.40" lengthAdjust="spacingAndGlyphs">3 KB</text><text x="318.00" y="293" font-size="10.20" fill="#222" textLength="147.00" lengthAdjust="spacingAndGlyphs">toExport_Prueba_M3270_Recording_</text><text x="469.60" y="293" font-size="11.60" fill="#555" textLength="22.80" lengthAdjust="spacingAndGlyphs">XXX</text><text x="529.50" y="293" font-size="10.40" fill="#737373" textLength="72.80" lengthAdjust="spacingAndGlyphs">25/11/2021 11:37</text><text x="654.80" y="293" font-size="10.20" fill="#737373" textLength="66.10" lengthAdjust="spacingAndGlyphs">Archivo MACRO</text><text x="799.50" y="293" font-size="10.20" fill="#737373" textLength="18.40" lengthAdjust="spacingAndGlyphs">3 KB</text><text x="105.40" y="589" font-size="9.60" fill="#3a5278" textLength="49.60" lengthAdjust="spacingAndGlyphs">4 elementos</text><text x="162.70" y="615" font-size="12.60" fill="#333" textLength="127.70" lengthAdjust="spacingAndGlyphs">Escribe aquí para buscar</text><text x="896.50" y="615" font-size="11.60" fill="#fff" textLength="21.80" lengthAdjust="spacingAndGlyphs">13°C</text><text x="1002.00" y="606" font-size="10.20" fill="#fff" textLength="21.30" lengthAdjust="spacingAndGlyphs">11:37</text><text x="988.40" y="621" font-size="10.20" fill="#fff" textLength="46.90" lengthAdjust="spacingAndGlyphs">27/12/2021</text><text x="1084.00" y="627" font-size="12.00" fill="#222" font-weight="700">¶</text></svg>
</body></html>
